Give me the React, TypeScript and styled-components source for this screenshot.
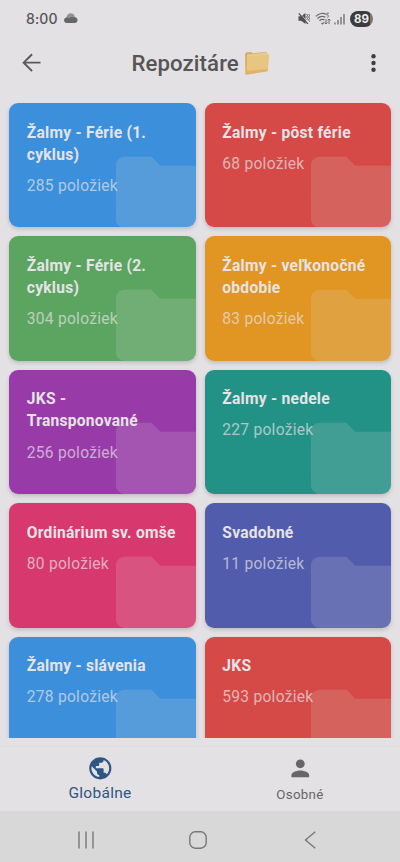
import React from "react";
import styled, { createGlobalStyle } from "styled-components";

const Global = createGlobalStyle`
  * { box-sizing: border-box; }
  body { margin: 0; background: #e3e1e4; font-family: Roboto, "Noto Sans", sans-serif; }
`;

const Screen = styled.div`
  width: 400px;
  height: 862px;
  display: flex;
  flex-direction: column;
  overflow: hidden;
  background: #e3e1e4;
  color: #555;
`;

const StatusBar = styled.div`
  height: 37px;
  flex: none;
  display: flex;
  align-items: center;
  padding: 0 27px 0 26px;
`;

const Clock = styled.span`
  font: 500 14px/20px Inter, sans-serif;
  letter-spacing: 0.1px;
  color: #555;
  width: 38px;
`;

const StatusIcons = styled.div`
  margin-left: auto;
  display: flex;
  align-items: center;
`;

const Battery = styled.span`
  width: 23px;
  height: 16px;
  margin-left: 5px;
  border-radius: 8px;
  background: linear-gradient(90deg, #3c3c3c 20px, #777 20px);
  color: #eee;
  font: 700 11.5px/16px Inter, sans-serif;
  text-align: center;
`;

const AppBar = styled.header`
  height: 66px;
  flex: none;
  display: flex;
  align-items: center;
  justify-content: space-between;
  padding: 0 16px 14px 20.5px;
`;

const Heading = styled.h1`
  margin: 0 3.5px 0 0;
  display: flex;
  align-items: center;
  gap: 5px;
  font-size: 22.2px;
  line-height: 28px;
  font-weight: 500;
  letter-spacing: 0.1px;
`;

const IconButton = styled.button`
  display: flex;
  padding: 0;
  border: 0;
  background: none;
  color: #3f3f3f;
`;

const Grid = styled.main`
  height: 635px;
  flex: none;
  overflow: hidden;
  padding: 0 9px;
  display: grid;
  grid-template-columns: 1fr 1fr;
  grid-auto-rows: 124.4px;
  gap: 9px;
`;

const CardShadow = styled.div`
  display: grid;
  border-radius: 9px;
  box-shadow: 0 2px 4px rgba(0, 0, 0, 0.17);
`;

const Card = styled.article<{ $color: string }>`
  position: relative;
  overflow: hidden;
  border-radius: 9px;
  padding: 18.5px 17.8px;
  background: ${(p) => p.$color};
`;

const FolderMark = styled.svg`
  position: absolute;
  right: -18px;
  bottom: -18px;
  width: 106.7px;
  height: 106.7px;
  fill: rgba(226, 222, 226, 0.16);
`;

const CardTitle = styled.h2`
  margin: 0;
  color: #e5e3e6;
  font-size: 15.6px;
  line-height: 22.2px;
  font-weight: 700;
  letter-spacing: 0.25px;
`;

const CardCount = styled.p`
  margin: 9px 0 0;
  color: rgba(229, 227, 230, 0.7);
  font-size: 15.6px;
  line-height: 22.2px;
  letter-spacing: 0.25px;
`;

const Tabs = styled.nav`
  flex: 1;
  margin-top: 8px;
  border-top: 1px solid #dfdddf;
  display: grid;
  grid-template-columns: 1fr 1fr;
`;

const Tab = styled.div<{ $active?: boolean }>`
  display: flex;
  flex-direction: column;
  align-items: center;
  padding-top: 9px;
  color: ${(p) => (p.$active ? "#2e5684" : "#666")};
`;

const TabLabel = styled.span<{ $active?: boolean }>`
  font-size: ${(p) => (p.$active ? "15.5px" : "13.3px")};
  line-height: 20px;
  letter-spacing: ${(p) => (p.$active ? "0.3px" : "0.3px")};
  margin-top: ${(p) => (p.$active ? "1px" : "3px")};
`;

const TabIcon = styled.svg`
  width: 26.6px;
  height: 26.6px;
  margin-top: -1px;
  fill: currentColor;
`;

const SystemBar = styled.div`
  height: 51px;
  flex: none;
  background: #d8d8d8;
  display: grid;
  grid-template-columns: 112px 112px 112px;
  justify-content: center;
  justify-items: center;
  align-items: center;
  padding: 6px 4px 0 0;
`;

const cards = [
  ["Žalmy - Férie (1. cyklus)", 285, "#3c90db"],
  ["Žalmy - pôst férie", 68, "#d54a46"],
  ["Žalmy - Férie (2. cyklus)", 304, "#5ca561"],
  ["Žalmy - veľkonočné obdobie", 83, "#e19522"],
  ["JKS - Transponované", 256, "#983ba8"],
  ["Žalmy - nedele", 227, "#239286"],
  ["Ordinárium sv. omše", 80, "#d7386d"],
  ["Svadobné", 11, "#525cac"],
  ["Žalmy - slávenia", 278, "#3c90db"],
  ["JKS", 593, "#d54a46"],
] as const;

const CloudIcon = () => (
  <svg width="14" height="11" viewBox="0 0 14 10">
    <path d="M3 6a4 4 0 0 1 7.6-3.8L12 7z" fill="#929292" />
    <path d="M3 9.500a2.800 2.800 0 0 1-.2-5.600c1.100-.1 1.900.2 2.600.9C6.500 3.500 8 3.300 9.500 3.900c2.400-.9 4 .6 4 2.700C13.500 8.500 12.400 9.500 11 9.500z" fill="#666" />
  </svg>
);

const MuteIcon = () => (
  <svg width="12" height="13" viewBox="0 0 12 13">
    <path d="M.5 4.200h2.700L7.500 1v11L3.200 8.800H.5z" fill="#505050" />
    <path d="M1.800 1 10.500 11.200" stroke="#e3e1e4" strokeWidth=".8" />
    <path d="M.8 1.300 9.800 11.800" stroke="#505050" strokeWidth="1.300" />
    <path d="m8.700 2 .8 1.500-.8 1.500.8 1.500-.8 1.500M10.700 2l.8 1.500-.8 1.500.8 1.500-.8 1.500.8 1.500" stroke="#606060" fill="none" strokeWidth="1" />
  </svg>
);

const WifiIcon = () => (
  <svg width="16" height="14" viewBox="0 0 16 14" fill="none" stroke="#6a6a6a" strokeWidth="1.200">
    <path d="M.8 4.300C4 1 8.500.8 11 2.200M2.500 6.500c2.300-2.300 5.400-2.700 7.800-1.200M4.500 8.700c1.600-1.500 3.400-1.600 5-.6M6.500 10.800l1 1 1.400-1.500" />
    <path d="M14 1.200h-2l-.2 1.900c2.500-.4 2.500 2.400 0 2.100" strokeWidth=".9" />
    <path d="M11 7v5m-1.400-1.500L11 12l1.400-1.500M14 12V7m-1.400 1.500L14 7l1.400 1.500" strokeWidth="1" />
  </svg>
);

const SignalIcon = () => (
  <svg width="11" height="12" viewBox="0 0 11 12" fill="none" stroke="#6c6c6c" strokeWidth="1.300">
    <path d="M1 11.500V9.500M4 11.500V7M7 11.500V4M10 11.500V1" />
  </svg>
);

const FolderEmoji = () => (
  <svg width="26" height="26" viewBox="0 0 26 26">
    <path d="M1 4.200 2 2.500l5-.6 2 1.300 13-1.200 1.500 1.500v4L2 24z" fill="#d9a962" />
    <path d="m3 4.500 20-2 .5 3L3 8z" fill="#e6cc8d" />
    <path d="M1.500 7 24 4.300q1.400-.1 1.300 1.200L23.700 21 2.600 24.600q-1 .1-1.100-1z" fill="#e7c681" />
    <path d="m2 21 22-2-.3 2.200-21 3.500z" fill="#e4b16c" />
    <path d="M1.500 7v16.500q0 1 1.100 1.100L3 7" fill="#e6a65e" />
  </svg>
);

const StatusGlyphs = styled.div`
  display: flex;
  align-items: center;
  gap: 3px;

  svg:first-child {
    margin-right: 2px;
  }
`;

export default function App() {
  return (
    <Screen>
      <Global />
      <StatusBar>
        <Clock>8:00</Clock>
        <CloudIcon />
        <StatusIcons>
          <StatusGlyphs>
            <MuteIcon />
            <WifiIcon />
            <SignalIcon />
          </StatusGlyphs>
          <Battery>89</Battery>
        </StatusIcons>
      </StatusBar>
      <AppBar>
        <IconButton aria-label="Späť">
          <svg width="21.300" height="21.300" viewBox="0 0 24 24" fill="none" stroke="#5a5a5a" strokeWidth="2.200">
            <path d="M22 12H3.500M12.500 2.500 3 12l9.500 9.500" />
          </svg>
        </IconButton>
        <Heading>
          Repozitáre
          <FolderEmoji />
        </Heading>
        <IconButton aria-label="Menu">
          <svg width="21" height="22" viewBox="0 0 21 22" fill="currentColor">
            <circle cx="10.500" cy="4.200" r="2.200" />
            <circle cx="10.500" cy="11" r="2.200" />
            <circle cx="10.500" cy="17.800" r="2.200" />
          </svg>
        </IconButton>
      </AppBar>
      <Grid>
        {cards.map(([title, count, color]) => (
          <CardShadow key={title}>
            <Card $color={color}>
              <FolderMark viewBox="0 0 24 24">
                <path d="M10 4H4c-1.100 0-1.990.9-1.990 2L2 18c0 1.100.9 2 2 2h16c1.100 0 2-.9 2-2V8c0-1.100-.9-2-2-2h-8l-2-2z" />
              </FolderMark>
              <CardTitle>{title}</CardTitle>
              <CardCount>{count} položiek</CardCount>
            </Card>
          </CardShadow>
        ))}
      </Grid>
      <Tabs>
        <Tab $active>
          <TabIcon viewBox="0 0 24 24">
            <path d="M12 2C6.480 2 2 6.480 2 12s4.480 10 10 10 10-4.480 10-10S17.520 2 12 2zm-1 17.930c-3.950-.49-7-3.850-7-7.930 0-.62.080-1.210.21-1.790L9 15v1c0 1.100.9 2 2 2v1.930zm6.900-2.540c-.26-.81-1-1.390-1.900-1.390h-1v-3c0-.55-.45-1-1-1H8v-2h2c.55 0 1-.45 1-1V7h2c1.100 0 2-.9 2-2v-.41c2.930 1.190 5 4.060 5 7.410 0 2.080-.8 3.970-2.100 5.390z" />
          </TabIcon>
          <TabLabel $active>Globálne</TabLabel>
        </Tab>
        <Tab>
          <TabIcon viewBox="0 0 24 24">
            <path d="M12 12c2.210 0 4-1.790 4-4s-1.790-4-4-4-4 1.790-4 4 1.790 4 4 4zm0 2c-2.670 0-8 1.340-8 4v2h16v-2c0-2.660-5.330-4-8-4z" />
          </TabIcon>
          <TabLabel>Osobné</TabLabel>
        </Tab>
      </Tabs>
      <SystemBar>
        <svg width="18" height="18" viewBox="0 0 18 18" stroke="#777" strokeWidth="1.400">
          <path d="M2 .5v17M9 .5v17M16 .5v17" />
        </svg>
        <svg width="18" height="18" viewBox="0 0 18 18" fill="none" stroke="#777" strokeWidth="1.400">
          <rect x=".8" y=".8" width="16.400" height="16.400" rx="5.500" />
        </svg>
        <svg width="12" height="18" viewBox="0 0 12 18" fill="none" stroke="#777" strokeWidth="1.400">
          <path d="M11.300.8 1.500 9l9.800 8.200" />
        </svg>
      </SystemBar>
    </Screen>
  );
}
